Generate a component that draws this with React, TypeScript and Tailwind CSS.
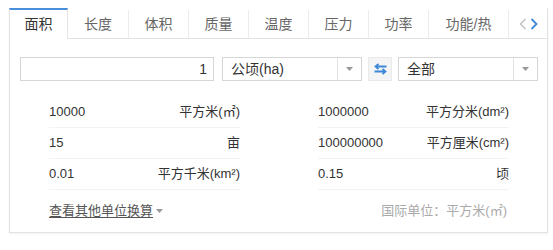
import React from "react";

// Unit converter card: tabs, input row, results grid, footer.

const TABS = ["长度", "体积", "质量", "温度", "压力", "功率"];

const ROWS: [string, string][][] = [
  [
    ["10000", "平方米(㎡)"],
    ["1000000", "平方分米(dm²)"],
  ],
  [
    ["15", "亩"],
    ["100000000", "平方厘米(cm²)"],
  ],
  [
    ["0.01", "平方千米(km²)"],
    ["0.15", "顷"],
  ],
];

const FONT = {
  fontFamily: '"Liberation Sans", Arial, "Noto Sans CJK SC", sans-serif',
};

function Caret() {
  return (
    <svg width="7" height="4" viewBox="0 0 7 4" aria-hidden>
      <path d="M0 0h7L3.5 4z" fill="#999" />
    </svg>
  );
}

function Select({ label }: { label: string }) {
  return (
    <div className="flex h-[24px] w-[140px] items-center border border-[#d6d6d6] bg-white">
      <span className="flex-1 pl-[8px] text-[14px] text-[#333]">{label}</span>
      <span className="flex h-full w-[24px] items-center justify-center border-l border-[#e3e3e3]">
        <Caret />
      </span>
    </div>
  );
}

export default function App() {
  return (
    <div className="h-[250px] w-[553px] bg-white pl-[9px] pt-[8px]" style={FONT}>
      <div className="w-[539px] border-x border-b border-[#e3e3e3] shadow-[0_1px_2px_rgba(0,0,0,0.06)]">
        {/* 标签栏 */}
        <div className="flex h-[31px] items-stretch">
          <div className="-ml-px flex w-[59px] items-center justify-center border-x border-t-2 border-x-[#e3e3e3] border-t-[#4a8fdc] bg-white text-[14px] text-[#333]">
            面积
          </div>
          <div className="flex flex-1 items-stretch border-b border-[#e3e3e3] pt-[2px] text-[14px] text-[#666]">
            {TABS.map((t, i) => (
              <div
                key={t}
                className={
                  i === 0
                    ? "flex w-[60px] items-center justify-center"
                    : "flex w-[60px] items-center justify-center border-l border-[#ececec]"
                }
              >
                {t}
              </div>
            ))}
            <div className="flex w-[80px] items-center justify-center border-l border-[#ececec]">
              功能/热
            </div>
            <div className="flex flex-1 items-center justify-center gap-[3px] border-l border-[#ececec]">
              <svg width="8" height="12" viewBox="0 0 8 12" aria-hidden>
                <path d="M6.5 1L1.5 6l5 5" fill="none" stroke="#c4c4c4" strokeWidth="1.6" />
              </svg>
              <svg width="8" height="12" viewBox="0 0 8 12" aria-hidden>
                <path d="M1.5 1l5 5-5 5" fill="none" stroke="#3d87d8" strokeWidth="1.8" />
              </svg>
            </div>
          </div>
        </div>

        {/* 输入行 */}
        <div className="mt-[18px] flex items-center pl-[10px]">
          <div className="flex h-[24px] w-[194px] items-center justify-end border border-[#d6d6d6] pr-[6px] text-[14px] text-[#333]">
            1
          </div>
          <div className="ml-[8px]">
            <Select label="公顷(ha)" />
          </div>
          <div className="ml-[6px] flex h-[24px] w-[24px] items-center justify-center border border-[#eaeaea] bg-[#f5f5f5]">
            <svg width="13" height="12" viewBox="0 0 13 12" aria-hidden>
              <path d="M12.5 3.5H1.5M4.5 0.8L1.5 3.5L4.5 6.2" fill="none" stroke="#3d87d8" strokeWidth="1.8" />
              <path d="M0.5 8.5h11M8.5 5.8l3 2.7-3 2.7" fill="none" stroke="#3d87d8" strokeWidth="1.8" />
            </svg>
          </div>
          <div className="ml-[6px]">
            <Select label="全部" />
          </div>
        </div>

        {/* 换算结果 */}
        <div className="mt-[16px] flex gap-[78px] pl-[39px] text-[13px] text-[#333]">
          {[0, 1].map((col) => (
            <div key={col} className="w-[191px]">
              {ROWS.map((row) => (
                <div
                  key={row[col][0]}
                  className="flex h-[31px] items-center justify-between border-b border-[#f3f3f3]"
                >
                  <span>{row[col][0]}</span>
                  <span>{row[col][1]}</span>
                </div>
              ))}
            </div>
          ))}
        </div>

        {/* 底部 */}
        <div className="flex h-[42px] items-center justify-between pl-[39px] pr-[40px] text-[13px]">
          <span className="flex items-center gap-[3px] text-[#555]">
            <span className="underline underline-offset-2">查看其他单位换算</span>
            <Caret />
          </span>
          <span className="text-[#aaa]">国际单位：平方米(㎡)</span>
        </div>
      </div>
    </div>
  );
}
